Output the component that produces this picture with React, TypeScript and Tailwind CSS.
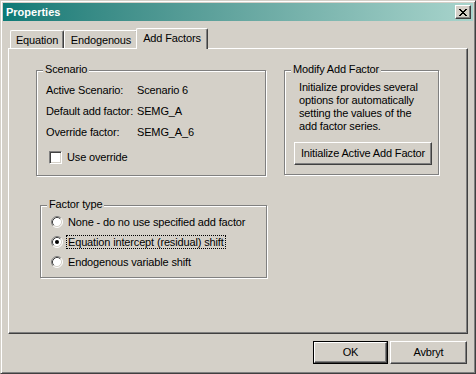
import type { ReactNode } from 'react'

const closeGlyph = [
  'XX....XX',
  '.XX..XX.',
  '..XXXX..',
  '...XX...',
  '..XXXX..',
  '.XX..XX.',
  'XX....XX',
]

function CloseIcon() {
  return (
    <svg width="8" height="7" viewBox="0 0 8 7" shapeRendering="crispEdges">
      {closeGlyph.map((row, y) =>
        row.split('').map((c, x) =>
          c === 'X' ? <rect key={`${x}-${y}`} x={x} y={y} width="1" height="1" fill="#000" /> : null
        )
      )}
    </svg>
  )
}

function GroupBox({ title, className, children }: { title: string; className: string; children: ReactNode }) {
  return (
    <div className={`relative border border-[#808080] shadow-[inset_1px_1px_0_#fff,1px_1px_0_#fff] ${className}`}>
      <span className="absolute -top-[8px] left-[6px] bg-[#d4d0c8] px-[2px] leading-[13px]">{title}</span>
      {children}
    </div>
  )
}

function Radio({ checked }: { checked?: boolean }) {
  return (
    <svg width="12" height="12" viewBox="0 0 12 12" className="shrink-0">
      <circle cx="6" cy="6" r="5" fill="#fff" />
      <path d="M2.11 9.89 A5.5 5.5 0 0 1 9.89 2.11" stroke="#808080" fill="none" />
      <path d="M9.89 2.11 A5.5 5.5 0 0 1 2.11 9.89" stroke="#fff" fill="none" />
      <path d="M2.82 9.18 A4.5 4.5 0 0 1 9.18 2.82" stroke="#404040" fill="none" />
      <path d="M9.18 2.82 A4.5 4.5 0 0 1 2.82 9.18" stroke="#d4d0c8" fill="none" />
      {checked && <circle cx="6" cy="6" r="2" fill="#000" />}
    </svg>
  )
}

function Win2kButton({ label, className, isDefault }: { label: string; className: string; isDefault?: boolean }) {
  const inner = (
    <div className="flex h-full w-full items-center justify-center border border-t-white border-l-white border-r-[#404040] border-b-[#404040] shadow-[inset_-1px_-1px_0_#808080]">
      {label}
    </div>
  )
  if (isDefault) {
    return <div className={`border border-black ${className}`}>{inner}</div>
  }
  return <div className={className}>{inner}</div>
}

export default function App() {
  const tabs = ['Equation', 'Endogenous', 'Add Factors']
  const tabWidths = ['w-[54px]', 'w-[74px]', 'w-[72px]']

  return (
    <div className="h-[374px] w-[476px] bg-[#d4d0c8] font-['Liberation_Sans',Arial,sans-serif] text-[11px] leading-[13px] tracking-[-0.15px] text-black">
      <div className="flex h-full w-full flex-col border border-t-[#d4d0c8] border-l-[#d4d0c8] border-r-[#404040] border-b-[#404040] p-[2px] shadow-[inset_1px_1px_0_#fff,inset_-1px_-1px_0_#808080]">
        {/* barre de titre */}
        <div className="flex h-[18px] items-center justify-between bg-gradient-to-r from-[#0a7a76] to-[#a8d4cc] pl-[3px] pr-[2px]">
          <span className="font-bold tracking-normal text-white">Properties</span>
          <div className="flex h-[14px] w-[16px] items-center justify-center border border-t-white border-l-white border-r-[#404040] border-b-[#404040] bg-[#d4d0c8] shadow-[inset_-1px_-1px_0_#808080]">
            <CloseIcon />
          </div>
        </div>

        {/* onglets */}
        <div className="mt-[7px] flex h-[20px] items-end pl-[7px]">
          {tabs.map((tab, i) => {
            const selected = i === 2
            return (
              <div
                key={tab}
                className={`${tabWidths[i]} flex justify-center rounded-t-[2px] border-t border-l border-r border-t-white border-l-white border-r-[#404040] bg-[#d4d0c8] pt-[3px] shadow-[inset_-1px_0_0_#808080] ${
                  selected ? 'relative z-10 -mb-[1px] -ml-[2px] h-[21px]' : 'h-[18px]'
                }`}
              >
                {tab}
              </div>
            )
          })}
        </div>

        {/* panneau */}
        <div className="mx-[5px] h-[286px] border border-t-white border-l-white border-r-[#404040] border-b-[#404040] shadow-[inset_-1px_-1px_0_#808080]">
          <div className="mt-[21px] ml-[27px] flex gap-[18px]">
            <GroupBox title="Scenario" className="h-[106px] w-[230px]">
              <div className="pt-[9px] pl-[9px]">
                <div className="flex h-[21px] items-center">
                  <span className="w-[91px]">Active Scenario:</span>
                  <span>Scenario 6</span>
                </div>
                <div className="flex h-[21px] items-center">
                  <span className="w-[91px]">Default add factor:</span>
                  <span>SEMG_A</span>
                </div>
                <div className="flex h-[21px] items-center">
                  <span className="w-[91px]">Override factor:</span>
                  <span>SEMG_A_6</span>
                </div>
                <div className="mt-[4px] flex h-[21px] items-center gap-[5px] pl-[3px]">
                  <div className="h-[13px] w-[13px] border border-t-[#808080] border-l-[#808080] border-r-white border-b-white bg-white shadow-[inset_1px_1px_0_#404040,inset_-1px_-1px_0_#d4d0c8]" />
                  <span>Use override</span>
                </div>
              </div>
            </GroupBox>

            <GroupBox title="Modify Add Factor" className="h-[105px] w-[155px]">
              <div className="pt-[10px] pl-[14px]">
                Initialize provides several
                <br />
                options for automatically
                <br />
                setting the values of the
                <br />
                add factor series.
              </div>
              <Win2kButton label="Initialize Active Add Factor" className="mt-[9px] ml-[9px] h-[23px] w-[138px]" />
            </GroupBox>
          </div>

          <GroupBox title="Factor type" className="mt-[29px] ml-[31px] h-[73px] w-[227px]">
            <div className="pt-[6px] pl-[10px]">
              {[
                'None - do no use specified add factor',
                'Equation intercept (residual) shift',
                'Endogenous variable shift',
              ].map((label, i) => (
                <div key={label} className="flex h-[20px] items-center gap-[3px]">
                  <Radio checked={i === 1} />
                  <span
                    className={`border px-[1px] leading-[12px] ${
                      i === 1 ? 'border-dotted border-black' : 'border-transparent'
                    }`}
                  >
                    {label}
                  </span>
                </div>
              ))}
            </div>
          </GroupBox>
        </div>

        {/* boutons */}
        <div className="mt-[7px] mr-[6px] flex justify-end gap-[2px]">
          <Win2kButton label="OK" isDefault className="h-[23px] w-[75px]" />
          <Win2kButton label="Avbryt" className="h-[23px] w-[77px]" />
        </div>
      </div>
    </div>
  )
}
